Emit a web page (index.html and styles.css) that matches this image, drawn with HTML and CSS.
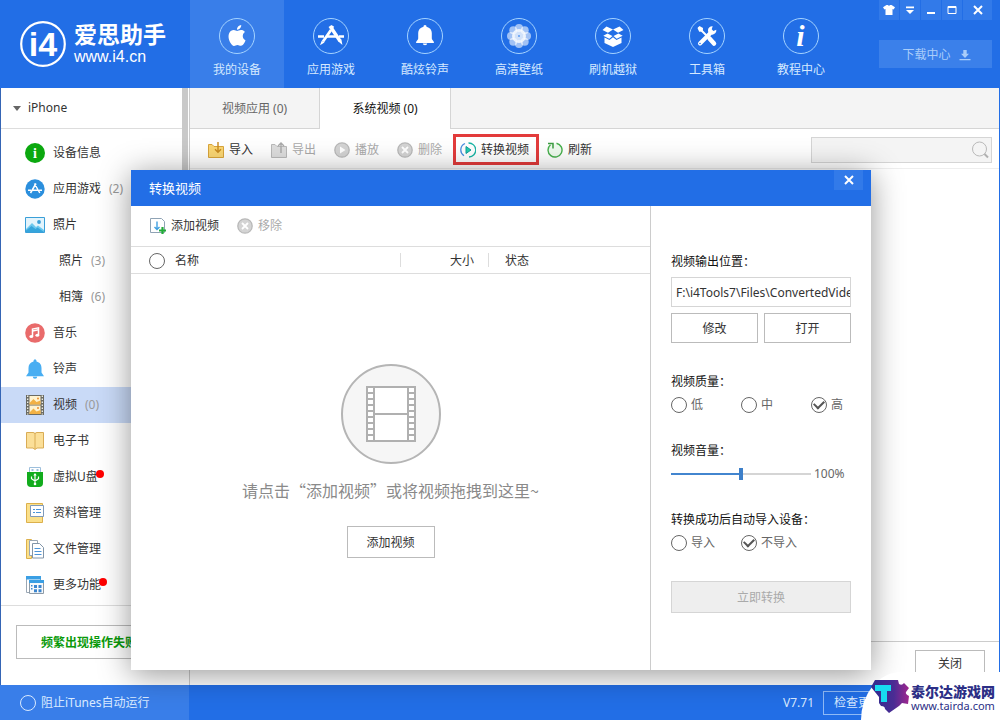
FILE: index.html
```html
<!DOCTYPE html>
<html lang="zh-CN">
<head>
<meta charset="utf-8">
<title>爱思助手</title>
<meta name="viewport" content="width=device-width, initial-scale=1">
<link rel="stylesheet" href="styles.css">
</head>
<body>
<div class="app">
  <header class="header">
    <div class="brand">
      <svg class="brand-mark" viewBox="0 0 46 46" aria-hidden="true">
        <circle cx="23" cy="23" r="21.8" fill="none" stroke="#fff" stroke-width="2.2"/>
        <text x="23" y="35" text-anchor="middle" class="brand-glyph">i4</text>
      </svg>
      <div class="brand-text">
        <strong class="brand-name">爱思助手</strong>
        <span class="brand-url">www.i4.cn</span>
      </div>
    </div>
    <nav class="topnav">
      <a class="topnav-item is-active" href="#">
        <svg class="topnav-icon" viewBox="0 0 36 36"><circle class="ring" cx="18" cy="18" r="17.5"/><path transform="translate(7.6 7) scale(.87)" fill="#fff" d="M12.152 6.896c-.948 0-2.415-1.078-3.96-1.04-2.04.027-3.91 1.183-4.961 3.014-2.117 3.675-.546 9.103 1.519 12.09 1.013 1.454 2.208 3.09 3.792 3.039 1.52-.065 2.09-.987 3.935-.987 1.831 0 2.35.987 3.96.948 1.637-.026 2.676-1.48 3.676-2.948 1.156-1.688 1.636-3.325 1.662-3.415-.039-.013-3.182-1.221-3.22-4.857-.026-3.04 2.48-4.494 2.597-4.559-1.429-2.09-3.623-2.324-4.39-2.376-2-.156-3.675 1.09-4.61 1.09zM15.53 3.83c.843-1.012 1.4-2.427 1.245-3.83-1.207.052-2.662.805-3.532 1.818-.78.896-1.454 2.338-1.273 3.714 1.338.104 2.715-.688 3.559-1.701"/></svg>
        <span>我的设备</span>
      </a>
      <a class="topnav-item" href="#">
        <svg class="topnav-icon" viewBox="0 0 36 36"><circle class="ring" cx="18" cy="18" r="17.5"/><g stroke="#fff" fill="none"><path d="M5 18.5h6M14 18.5h9M26 18.5h5" stroke-width="2.6"/><path d="M17 8l10 15" stroke-width="3.4"/><path d="M20 8l-1.500 2.200M18 12L10 23.500" stroke-width="2.800"/></g><path fill="#fff" d="M25.400 23.500l3-2 1 5.500zM8.700 22.700l2.800 1.800-4.500 2.800z"/></svg>
        <span>应用游戏</span>
      </a>
      <a class="topnav-item" href="#">
        <svg class="topnav-icon" viewBox="0 0 36 36"><circle class="ring" cx="18" cy="18" r="17.5"/><path fill="#fff" d="M18 7a1.500 1.500 0 0 1 1.500 1.700C23 9.500 24.800 12 24.800 15v5.500c0 1.500 2.200 2 2.200 4.500H9c0-2.500 2.200-3 2.200-4.500V15c0-3 1.800-5.500 5.300-6.300A1.500 1.500 0 0 1 18 7zM15.800 25.500h4.400a2.200 1.800 0 0 1-4.400 0z"/></svg>
        <span>酷炫铃声</span>
      </a>
      <a class="topnav-item" href="#">
        <svg class="topnav-icon" viewBox="0 0 36 36"><circle class="ring" cx="18" cy="18" r="17.5"/><g fill="#fff" fill-opacity=".58"><circle cx="18" cy="10" r="4"/><circle cx="23.700" cy="12.300" r="4"/><circle cx="26" cy="18" r="4"/><circle cx="23.700" cy="23.700" r="4"/><circle cx="18" cy="26" r="4"/><circle cx="12.300" cy="23.700" r="4"/><circle cx="10" cy="18" r="4"/><circle cx="12.300" cy="12.300" r="4"/></g><circle cx="18" cy="18" r="7" fill="#fff" fill-opacity=".8"/><circle cx="18" cy="18" r="1" fill="#5b9af0"/></svg>
        <span>高清壁纸</span>
      </a>
      <a class="topnav-item" href="#">
        <svg class="topnav-icon" viewBox="0 0 36 36"><circle class="ring" cx="18" cy="18" r="17.5"/><g fill="#fff"><path d="M11.500 8.500l6.500 3-5 3.300-5.500-2.800zM24.500 8.500l-6.500 3 5 3.300 5.500-2.800z"/><path d="M12.500 15.400l5 2.600-3.200 2.700-6-3zM23.500 15.400l-5 2.600 3.200 2.700 6-3z"/><path d="M9.500 19.500l5 2.500 3.500-2.700 3.500 2.700 5-2.500V25L18 29l-8.500-4z"/></g></svg>
        <span>刷机越狱</span>
      </a>
      <a class="topnav-item" href="#">
        <svg class="topnav-icon" viewBox="0 0 36 36"><circle class="ring" cx="18" cy="18" r="17.5"/><g fill="none" stroke="#fff" stroke-linecap="round"><path d="M10 10l9 9" stroke-width="2"/><path d="M20.500 20.500l4.500 5" stroke-width="4.500"/><path d="M11 25.500l10-10" stroke-width="4"/></g><path fill="#fff" d="M8.500 10l2-2 3.500 2-.2 3.600-3.600.2z"/><path d="M27.300 11.800a4.200 4.200 0 1 1-3.600-3.500l-1 3 1.700 1.700z" fill="#fff"/><circle cx="11" cy="25.500" r=".8" fill="#226ee6"/></svg>
        <span>工具箱</span>
      </a>
      <a class="topnav-item" href="#">
        <svg class="topnav-icon" viewBox="0 0 36 36"><circle class="ring" cx="18" cy="18" r="17.5"/><text class="info-glyph" x="17.500" y="28" text-anchor="middle">i</text></svg>
        <span>教程中心</span>
      </a>
    </nav>
    <div class="header-tools">
      <div class="window-buttons">
        <button class="win-btn" aria-label="皮肤"><svg viewBox="0 0 12 12"><path fill="#fff" d="M3.500 1h1.300q1.200 1.300 2.400 0h1.300L12 3.200l-1.400 2.300-1.100-.6V11h-7V4.900l-1.100.6L0 3.200z"/></svg></button>
        <button class="win-btn" aria-label="菜单"><svg viewBox="0 0 12 12"><path fill="#fff" d="M2 2.500h8v1.700H2zM2 6h8L6 10z"/></svg></button>
        <button class="win-btn" aria-label="最小化"><svg viewBox="0 0 12 12"><path fill="#fff" d="M2 8h8v2H2z"/></svg></button>
        <button class="win-btn" aria-label="最大化"><svg viewBox="0 0 12 12"><path fill="none" stroke="#fff" d="M2 2.500h8v7H2z"/><path stroke="#fff" d="M2 3.500h8"/></svg></button>
        <button class="win-btn win-close" aria-label="关闭窗口"><svg viewBox="0 0 12 12"><path stroke="#fff" stroke-width="2" d="M2 2l8 8M10 2l-8 8"/></svg></button>
      </div>
      <button class="download-btn">下载中心
        <svg viewBox="0 0 12 12"><path fill="currentColor" d="M4.300 1h3.400v3.700H10L6 9 2 4.700h2.300zM.5 10h11v1.200H.5z"/></svg>
      </button>
    </div>
  </header>

  <div class="workspace">
    <aside class="sidebar">
      <div class="side-scroll">
        <button class="device"><span class="caret"></span>iPhone</button>
        <nav class="side-nav">
          <a class="side-item" href="#"><svg viewBox="0 0 20 20"><circle cx="10" cy="10" r="10" fill="#0ba80f"/><text x="10" y="15" text-anchor="middle" class="side-info">i</text></svg>设备信息</a>
          <a class="side-item" href="#"><svg viewBox="0 0 20 20"><circle cx="10" cy="10" r="9.700" fill="#2b8fdd"/><g stroke="#fff" fill="none" stroke-width="1.500"><path d="M3 11.300h3M8 11.300h4.500M14.200 11.300H17M9.400 4.500l5.400 9.500M11 4.500L5.500 14"/></g></svg>应用游戏<span class="count">(2)</span></a>
          <a class="side-item" href="#"><svg viewBox="0 0 20 20"><path fill="#e3f4fc" stroke="#3a9fd8" d="M.5 2.500h19v15H.5z"/><path fill="#6cc8ee" d="M1 14l6-6 4 4 2-1.500 6 4.500v2H1z"/><path fill="#35a5dc" d="M1 15.500L6.500 11l4 3 2-1.500 6.500 4.500H1z"/><circle cx="14" cy="7" r="1.900" fill="#3a9fd8"/></svg>照片</a>
          <a class="side-item side-sub" href="#">照片<span class="count">(3)</span></a>
          <a class="side-item side-sub" href="#">相簿<span class="count">(6)</span></a>
          <a class="side-item" href="#"><svg viewBox="0 0 20 20"><circle cx="10" cy="10" r="9.800" fill="#e96b6b"/><path d="M7.500 13.500V6l6-1.200v7.300" fill="none" stroke="#fff" stroke-width="1.500"/><path stroke="#fff" stroke-width="1.500" d="M7.500 8l6-1.200"/><ellipse cx="6.300" cy="13.600" rx="1.900" ry="1.500" fill="#fff"/><ellipse cx="12.300" cy="12.300" rx="1.900" ry="1.500" fill="#fff"/></svg>音乐</a>
          <a class="side-item" href="#"><svg viewBox="0 0 20 20"><path fill="#49aef2" d="M10 0l1.500 1.500v1C15 3.300 16.500 6 16.500 9v4.500L19 17.300H1l2.500-3.800V9c0-3 1.500-5.700 5-6.500v-1zM7.800 17.800h4.400a2.200 2 0 0 1-4.400 0z"/></svg>铃声</a>
          <a class="side-item is-active" href="#"><svg viewBox="0 0 20 20"><path fill="#6b6b62" d="M1 0h18v20H1z"/><path fill="#fff3cf" d="M4.500 1h11v8.500h-11zM4.500 10.500h11V19h-11z"/><path fill="#f2b145" d="M4.500 8l4-4 3 3 4-1.500v4h-11zM4.500 17.500l4-4 3 3 4-1.500v4h-11z"/><path stroke="#f4f4ee" stroke-width="1.300" stroke-dasharray="1.500 1.500" d="M2.700.5v19M17.300.5v19"/><circle cx="13" cy="3.500" r="1" fill="#ee8f2d"/><circle cx="13" cy="13" r="1" fill="#ee8f2d"/></svg>视频<span class="count">(0)</span></a>
          <a class="side-item" href="#"><svg viewBox="0 0 20 20"><path fill="#fbdf98" stroke="#d9ac55" d="M1.500 1.500h6.500q2 0 2 1.500 0-1.500 2-1.500h6.500v15.500H12l-2 1.500-2-1.500H1.500z"/><path stroke="#d9ac55" d="M10 3v15"/></svg>电子书</a>
          <a class="side-item" href="#"><svg viewBox="0 0 20 20"><path fill="#fff" stroke="#9dbfdc" d="M4.500.5h11v5h-11z"/><path fill="#9dbfdc" d="M6.500 2h2v2h-2zM11.500 2h2v2h-2z"/><path fill="#12ac1d" d="M2 5h16v11q0 4-4 4H6q-4 0-4-4z"/><path fill="none" stroke="#fff" stroke-width="1.200" d="M10 17V7M6.500 9.500v2.200L10 14l3.500-2.300V9.500"/><path fill="#fff" d="M8.300 8.500L10 6l1.700 2.500z"/><circle cx="10" cy="17" r="1.300" fill="#fff"/></svg><span class="dotted">虚拟U盘</span></a>
          <a class="side-item" href="#"><svg viewBox="0 0 20 20"><path fill="#fbe08a" stroke="#dcb04c" d="M1.500.500h16v19h-16z"/><path fill="#fff" stroke="#7f9aba" d="M5.500 2.500h13v11h-13z"/><path stroke="#4d95d8" stroke-width="1.200" d="M8 6.500h2M11 6.500h5M8 9.500h2M11 9.500h5"/></svg>资料管理</a>
          <a class="side-item" href="#"><svg viewBox="0 0 20 20"><path fill="#fbe08a" stroke="#dcb04c" d="M1.500.500h5v19h-5z"/><path fill="#fff" stroke="#9aa7b4" d="M4.500 1.500h8v15h-8z"/><path fill="#fff" stroke="#8295a8" d="M7.500 4.500h7l4 4v10.500h-11z"/><path stroke="#4d95d8" d="M9.500 9.500h6M9.500 12.500h7M9.500 15.500h7"/></svg>文件管理</a>
          <a class="side-item" href="#"><svg viewBox="0 0 20 20"><path fill="#fff" stroke="#9aa7b4" d="M1.500 1.500h14v16h-14z"/><path fill="#3a9fe4" d="M1 1h15v3.500H1z"/><path fill="#f6f9fb" stroke="#8e9ba7" d="M4.500 5.500h14v13h-14z"/><path fill="#3a9fe4" d="M4 5h15v3H4z"/><path fill="#3c86cf" d="M9 10h3v3H9zM13.500 10h3v3h-3zM9 14.300h3v3H9zM13.500 14.300h3v3h-3zM6 10h1.500v1.500H6zM6 13h1.500v1.500H6z"/></svg><span class="dotted">更多功能</span></a>
        </nav>
      </div>
      <div class="side-help"><button class="help-btn">频繁出现操作失败？</button></div>
    </aside>

    <main class="main">
      <div class="tabs">
        <button class="tab">视频应用 (0)</button>
        <button class="tab is-active">系统视频 (0)</button>
      </div>
      <div class="toolbar">
        <button class="tool"><svg viewBox="0 0 16 16"><path fill="#fbd774" stroke="#d9a53b" d="M.5 2.500H4L6 4.500h9.500v11H.5z"/><path fill="none" stroke="#c98b1f" stroke-width="1.400" d="M10 0v10M7 7.300l3 3 3-3"/></svg>导入</button>
        <button class="tool" disabled><svg viewBox="0 0 16 16"><path fill="#dedede" stroke="#b9b9b9" d="M.5 2.500H4L6 4.500h9.500v11H.5z"/><path fill="none" stroke="#a9a9a9" stroke-width="1.400" d="M10 11V1M7 4l3-3 3 3"/></svg>导出</button>
        <button class="tool" disabled><svg viewBox="0 0 16 16"><circle cx="8" cy="8" r="7.200" fill="#d4d4d4" stroke="#b9b9b9" stroke-width="1.300"/><path fill="#fff" d="M6 4.500l5.500 3.500L6 11.500z"/></svg>播放</button>
        <button class="tool" disabled><svg viewBox="0 0 16 16"><circle cx="8" cy="8" r="7.200" fill="#d4d4d4" stroke="#b9b9b9" stroke-width="1.300"/><path stroke="#fff" stroke-width="1.800" d="M5 5l6 6M11 5l-6 6"/></svg>删除</button>
        <button class="tool tool-marked"><svg viewBox="0 0 16 16"><g fill="none" stroke-width="1.300"><path stroke="#4a8fe0" d="M5 1.500A7 7 0 0 0 4 13.800"/><path stroke="#19b5a5" d="M8.500 1A7 7 0 0 1 9 15"/></g><path fill="#21d0ad" stroke="#109c9c" d="M6 4.500l5 3.500-5 3.500z"/></svg>转换视频</button>
        <button class="tool"><svg viewBox="0 0 16 16"><path fill="#effbef" stroke="#47b04d" stroke-width="1.400" d="M9.500 1.200A7 7 0 1 1 3.500 2.700"/><path fill="none" stroke="#3c9c42" stroke-width="1.500" d="M1 1.500h5v5"/></svg>刷新</button>
        <label class="search">
          <input type="text" aria-label="搜索">
          <svg viewBox="0 0 18 18"><circle cx="8.500" cy="8" r="7" fill="none" stroke="#b9b9b9"/><path stroke="#b0b0b0" stroke-width="2" d="M13.500 13l3.500 3.500"/></svg>
        </label>
      </div>
      <div class="main-body"></div>
      <div class="main-actions"><button class="btn close-page">关闭</button></div>
    </main>
  </div>

  <footer class="statusbar">
    <label class="itunes"><input type="checkbox" class="round light">阻止iTunes自动运行</label>
    <div class="version"><span>V7.71</span><button class="update-btn">检查更新</button></div>
  </footer>

  <div class="overlay">
    <section class="dialog" role="dialog" aria-labelledby="dialog-title">
      <div class="dialog-head">
        <h2 class="dialog-title" id="dialog-title">转换视频</h2>
        <button class="win-btn win-close" aria-label="关闭"><svg viewBox="0 0 12 12"><path stroke="#fff" stroke-width="2" d="M2 2l8 8M10 2l-8 8"/></svg></button>
      </div>
      <div class="dialog-body">
        <div class="files">
          <div class="files-tools">
            <button class="tool"><svg viewBox="0 0 16 16"><path fill="#fff" stroke="#8fa3b5" d="M.5.500h11l3 3v11H.500z"/><path fill="none" stroke="#3f9fe0" stroke-width="1.400" d="M7 3.500v8M4.500 9L7 11.500 9.500 9"/><path stroke="#22ab38" stroke-width="2.200" d="M12.500 9v7M9 12.500h7"/></svg>添加视频</button>
            <button class="tool" disabled><svg viewBox="0 0 16 16"><circle cx="8" cy="8" r="7.200" fill="#d4d4d4" stroke="#b9b9b9" stroke-width="1.300"/><path stroke="#fff" stroke-width="1.800" d="M5 5l6 6M11 5l-6 6"/></svg>移除</button>
          </div>
          <table class="files-table">
            <thead><tr>
              <th class="col-name"><label class="choice-all"><input type="checkbox" class="round">名称</label></th>
              <th class="col-size">大小</th>
              <th class="col-state">状态</th>
            </tr></thead>
          </table>
          <div class="empty">
            <svg class="empty-icon" viewBox="0 0 100 100" aria-hidden="true">
              <circle cx="50" cy="50" r="49" fill="#f6f6f6" stroke="#b5b5b5" stroke-width="2"/>
              <path fill="#fff" d="M26 23h48v54H26z"/>
              <g fill="none" stroke="#b0b0b0" stroke-width="2"><path d="M26 23h48v54H26zM33 23v54M67 23v54M33 50h34"/><path d="M26 29h7M26 35h7M26 41h7M26 47h7M26 53h7M26 59h7M26 65h7M26 71h7M67 29h7M67 35h7M67 41h7M67 47h7M67 53h7M67 59h7M67 65h7M67 71h7"/></g>
            </svg>
            <p class="empty-text">请点击“添加视频”或将视频拖拽到这里~</p>
            <button class="btn empty-add">添加视频</button>
          </div>
        </div>
        <form class="options">
          <label class="opt-title" for="out-path">视频输出位置：</label>
          <input class="path" id="out-path" type="text" value="F:\i4Tools7\Files\ConvertedVideo">
          <div class="path-actions">
            <button type="button" class="btn">修改</button>
            <button type="button" class="btn">打开</button>
          </div>
          <fieldset class="group">
            <legend class="opt-title">视频质量：</legend>
            <div class="choices">
              <label class="choice"><input class="round" type="radio" name="quality">低</label>
              <label class="choice"><input class="round" type="radio" name="quality">中</label>
              <label class="choice"><input class="round" type="radio" name="quality" checked>高</label>
            </div>
          </fieldset>
          <div class="group">
            <label class="opt-title" for="volume">视频音量：</label>
            <div class="volume"><input class="slider" id="volume" type="range" min="0" max="200" value="100"><output for="volume">100%</output></div>
          </div>
          <fieldset class="group">
            <legend class="opt-title">转换成功后自动导入设备：</legend>
            <div class="choices">
              <label class="choice"><input class="round" type="radio" name="auto">导入</label>
              <label class="choice"><input class="round" type="radio" name="auto" checked>不导入</label>
            </div>
          </fieldset>
          <button type="button" class="btn convert" disabled>立即转换</button>
        </form>
      </div>
    </section>
  </div>

  <a class="site-badge" href="#">
    <svg class="site-mark" viewBox="0 0 38 34" aria-hidden="true">
      <defs><linearGradient id="mark" x1="0" x2="1"><stop offset="0" stop-color="#2f2c8e"/><stop offset=".6" stop-color="#4a2c94"/><stop offset="1" stop-color="#a0268e"/></linearGradient></defs>
      <path fill="url(#mark)" d="M4 0h23l1 4q3 2 5-1l5 5-3 4q-1 2 3 4l-1 8-6-1-3 3-10 7-4-4q0-3-4-3l-2-3v-6L0 7z"/>
      <path fill="none" stroke="#17dcf0" stroke-width="6" stroke-linejoin="round" d="M4 8h16M13 8v14"/>
    </svg>
    <span class="site-text"><strong>泰尔达游戏网</strong><span>www.tairda.com</span></span>
  </a>
</div>
</body>
</html>
```

FILE: styles.css
```css
* { box-sizing: border-box; }

body {
  margin: 0;
  font: 12px/20px "Noto Sans", "Noto Sans CJK SC", sans-serif;
  color: #333;
}

button, input { font: inherit; color: inherit; }
button { padding: 0; border: 0; background: none; cursor: pointer; }
a { color: inherit; text-decoration: none; }
svg { display: block; flex: none; }

.app {
  position: relative;
  display: flex;
  flex-direction: column;
  min-height: 100vh;
  overflow: hidden;
  background: #fff;
}

/* Header */
.header {
  display: flex;
  height: 88px;
  background: #226ee6;
  color: #fff;
}
.brand {
  display: flex;
  align-items: center;
  gap: 8px;
  width: 190px;
  padding-left: 20px;
}
.brand-mark { width: 46px; height: 46px; }
.brand-glyph { font: bold 34px "Liberation Sans", sans-serif; fill: #fff; }
.brand-text { display: flex; flex-direction: column; gap: 2px; }
.brand-name { font-size: 23px; line-height: 24px; font-weight: 700; }
.brand-url { font: 16px/18px "Liberation Sans", sans-serif; }
.topnav { display: flex; flex: 1; }
.topnav-item {
  display: flex;
  flex-direction: column;
  align-items: center;
  gap: 6px;
  width: 94px;
  padding-top: 18px;
  color: #d5e9ff;
}
.topnav-item.is-active { background: #397ee9; }
.topnav-icon { width: 36px; height: 36px; }
.ring { fill: none; stroke: #a5d3ff; stroke-width: 1; }
.info-glyph { font: italic bold 30px "Liberation Serif", serif; fill: #fff; }
.header-tools {
  display: flex;
  flex-direction: column;
  gap: 20px;
  padding-right: 8px;
}
.window-buttons { display: flex; }
.win-btn {
  display: grid;
  place-items: center;
  width: 21px;
  height: 20px;
  border-right: 1px solid #226ee6;
  background: #327ae9;
}
.win-btn svg { width: 12px; height: 12px; }
.win-close { width: 29px; border-right: 0; }
.download-btn {
  display: flex;
  align-items: center;
  justify-content: center;
  gap: 8px;
  height: 28px;
  padding: 2px 0 0 2px;
  background: #3b80ea;
  color: #a9cdfa;
}
.download-btn svg { width: 12px; height: 12px; }

/* Sidebar */
.workspace {
  display: flex;
  flex: 1;
  border-left: 1px solid #3565b5;
  border-right: 1px solid #226ee6;
}
.sidebar {
  display: flex;
  flex-direction: column;
  width: 189px;
  border-right: 1px solid #ccc;
}
.side-scroll {
  padding-bottom: 2px;
  border-bottom: 1px solid #ddd;
  background: linear-gradient(#c9c9c9, #c9c9c9) 181px 0 / 6px 100% no-repeat;
}
.device {
  display: flex;
  align-items: center;
  gap: 7px;
  width: 181px;
  height: 41px;
  padding-left: 12px;
  border-bottom: 1px solid #ddd;
}
.caret {
  border: 4px solid transparent;
  border-top: 5px solid #666;
  border-bottom: 0;
}
.side-nav { width: 181px; padding-top: 6px; }
.side-item {
  display: flex;
  align-items: center;
  gap: 8px;
  height: 36px;
  padding-left: 24px;
}
.side-item svg { width: 20px; height: 20px; }
.side-item.is-active { background: #c9daf7; }
.side-sub { padding-left: 58px; }
.side-info { font: bold 14px "Liberation Serif", serif; fill: #fff; }
.count { color: #999; }
.dotted { position: relative; }
.dotted::after {
  content: "";
  position: absolute;
  top: 3px;
  right: -6px;
  width: 8px;
  height: 8px;
  border-radius: 50%;
  background: #f00;
}
.side-help { display: flex; padding: 19px 15px 26px; }
.help-btn {
  flex: 1;
  height: 34px;
  padding-top: 1px;
  border: 1px solid #bbb;
  color: #0a9a0a;
  font-weight: 700;
}

/* Main area */
.main { display: flex; flex-direction: column; flex: 1; min-width: 0; }
.tabs {
  display: flex;
  height: 41px;
  background: #f4f4f4;
  box-shadow: inset 0 -1px #d5d5d5;
}
.tab {
  width: 130px;
  border-right: 1px solid #d5d5d5;
  color: #666;
}
.tab.is-active { width: 131px; background: #fff; color: #111; }
.toolbar {
  display: flex;
  align-items: center;
  gap: 18px;
  height: 40px;
  padding: 2px 7px 0 18px;
  border-bottom: 1px solid #eee;
}
.tool {
  display: flex;
  align-items: center;
  gap: 5px;
  white-space: nowrap;
}
.tool svg { width: 16px; height: 16px; }
.tool:disabled { color: #aaa; }
.tool-marked {
  height: 31px;
  margin: 0 -10px 0 -7px;
  padding: 0 7px 0 4px;
  border: 3px solid #e33b3b;
}
.search {
  display: flex;
  align-items: center;
  width: 181px;
  height: 26px;
  margin-left: auto;
  padding-right: 2px;
  border: 1px solid #d5d5d5;
  background: #f4f4f4;
}
.search input {
  flex: 1;
  min-width: 0;
  border: 0;
  background: none;
  outline: 0;
}
.search svg { width: 18px; height: 18px; }
.main-body { flex: 1; }
.main-actions {
  display: flex;
  justify-content: flex-end;
  padding: 8px 14px 9px;
  border-top: 1px solid #ccc;
}
.btn {
  height: 30px;
  padding-top: 2px;
  border: 1px solid #bbb;
  background: #fff;
}
.close-page { width: 70px; height: 26px; }

/* Status bar */
.statusbar {
  display: flex;
  height: 35px;
  background: #226ee6;
  color: #d9eaff;
}
.itunes {
  display: flex;
  align-items: center;
  gap: 5px;
  width: 189px;
  padding-left: 20px;
  background: #397ee9;
}
.version {
  display: flex;
  align-items: center;
  gap: 9px;
  margin-left: auto;
  padding-right: 107px;
}
.update-btn {
  width: 70px;
  height: 24px;
  border: 1px solid #8fbaf6;
}

/* Round check marks */
.round {
  appearance: none;
  display: grid;
  place-items: center;
  flex: none;
  width: 16px;
  height: 16px;
  margin: 0;
  border: 1px solid #666;
  border-radius: 50%;
}
.round:checked::before {
  content: "";
  width: 8px;
  height: 5px;
  margin-bottom: 3px;
  border: solid #555;
  border-width: 0 0 2px 2px;
  rotate: -45deg;
}
.round.light { border-color: #d9eaff; }

/* Dialog */
.overlay {
  position: absolute;
  inset: 0;
  display: flex;
  padding: 170px 129px 50px 131px;
}
.dialog {
  display: flex;
  flex-direction: column;
  flex: 1;
  min-width: 0;
  background: #fff;
  box-shadow: 0 4px 30px rgba(0, 0, 0, .42);
}
.dialog-head {
  display: flex;
  justify-content: space-between;
  height: 36px;
  padding: 0 8px 0 18px;
  background: #226ee6;
  color: #fff;
}
.dialog-title { margin: 0; font-size: 13px; font-weight: 400; line-height: 36px; }
.dialog-body { display: flex; flex: 1; }
.files { display: flex; flex-direction: column; flex: 1; }
.files-tools {
  display: flex;
  align-items: center;
  gap: 18px;
  height: 40px;
  padding-left: 19px;
}
.files-table {
  width: 100%;
  table-layout: fixed;
  border-collapse: collapse;
  border: solid #ddd;
  border-width: 1px 0;
}
.files-table th {
  height: 27px;
  padding: 1px 0 0;
  font-weight: 400;
  text-align: left;
  background: linear-gradient(#ddd, #ddd) right / 1px 14px no-repeat;
}
.files-table .col-name { width: 52%; padding-left: 18px; }
.files-table .col-size { width: 17%; padding-right: 15px; text-align: right; }
.files-table .col-state { padding-left: 16px; background: none; }
.choice-all { display: flex; align-items: center; gap: 10px; }
.empty {
  display: flex;
  flex-direction: column;
  align-items: center;
  padding-top: 90px;
}
.empty-icon { width: 100px; height: 100px; }
.empty-text {
  margin: 14px 0 24px;
  font: 16px/24px "Noto Sans CJK SC", sans-serif;
  color: #8a8a8a;
}
.empty-add { width: 88px; height: 32px; }

.options {
  display: flex;
  flex-direction: column;
  width: 221px;
  padding: 46px 20px 20px;
  border-left: 1px solid #ccc;
}
.opt-title { display: block; padding: 0; color: #111; }
.path {
  width: 100%;
  height: 30px;
  margin: 5px 0 6px;
  padding: 0 0 0 4px;
  border: 1px solid #d5d5d5;
}
.path-actions {
  display: grid;
  grid-template-columns: 1fr 1fr;
  gap: 6px;
  margin-bottom: 2px;
}
.group { min-width: 0; margin: 27px 0 0; padding: 0; border: 0; }
.group:last-of-type { margin-top: 26px; }
.choices { display: flex; margin-top: 3px; color: #666; }
.choice { display: flex; align-items: center; gap: 4px; width: 70px; white-space: nowrap; }
.choice:nth-child(3) { width: auto; }
.volume { display: flex; align-items: center; gap: 3px; margin-top: 3px; color: #666; }
.slider {
  appearance: none;
  width: 140px;
  height: 16px;
  margin: 0;
  background: linear-gradient(90deg, #4285cf 50%, #d5d5d5 50%) center / 100% 2px no-repeat;
}
.slider::-webkit-slider-thumb {
  appearance: none;
  width: 4px;
  height: 12px;
  background: #3d7fc9;
}
.convert { height: 32px; margin-top: 28px; border-color: #d5d5d5; background: #eee; color: #aaa; }

/* Site badge */
.site-badge {
  position: absolute;
  right: 0;
  bottom: 0;
  display: flex;
  align-items: center;
  gap: 2px;
  height: 48px;
  padding: 2px 5px 0 10px;
  border-top-left-radius: 40px 48px;
  background: #fff;
  color: #2c2f86;
}
.site-mark { width: 38px; height: 34px; }
.site-text { display: flex; flex-direction: column; gap: 1px; font: 11px/12px "Noto Sans", sans-serif; }
.site-text strong { font: 900 14px/16px "Noto Sans CJK SC", sans-serif; }
```
